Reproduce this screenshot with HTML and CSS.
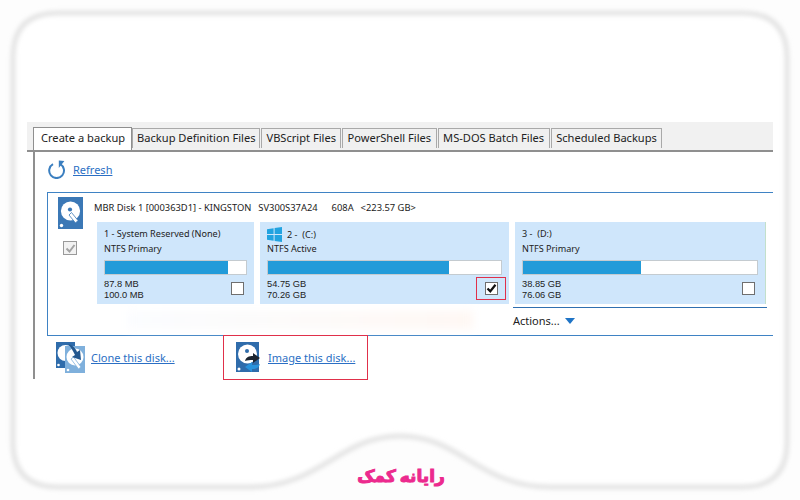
FILE: index.html
```html
<!DOCTYPE html>
<html lang="en">
<head>
<meta charset="utf-8">
<title>Create a backup</title>
<link rel="stylesheet" href="styles.css">
</head>
<body>
<svg class="frame" width="800" height="500" viewBox="0 0 800 500" aria-hidden="true">
  <defs>
    <path id="panel" d="M58 13H742C772 13 787 28 787 58V442C787 472 772 487 742 487H550C480 487 460 436 400 436C340 436 320 487 250 487H58C28 487 13 472 13 442V58C13 28 28 13 58 13Z"/>
    <filter id="soft" x="-5%" y="-5%" width="110%" height="110%"><feGaussianBlur stdDeviation="2.2"/></filter>
  </defs>
  <use href="#panel" fill="#ffffff"/>
  <use href="#panel" fill="none" stroke="#e4e4e4" stroke-width="5" filter="url(#soft)"/>
</svg>
<main class="shot">
  <nav class="tabs">
    <span class="tab tab-active">Create a backup</span>
    <span class="tab">Backup Definition Files</span>
    <span class="tab">VBScript Files</span>
    <span class="tab">PowerShell Files</span>
    <span class="tab">MS-DOS Batch Files</span>
    <span class="tab">Scheduled Backups</span>
  </nav>
  <section class="pane">
    <div class="refresh">
      <svg class="refresh-icon" width="19" height="19" viewBox="0 0 19 19" aria-hidden="true">
        <path d="M6 4.2A7.4 7.4 0 1 0 13.2 4.2" fill="none" stroke="#3b7fc0" stroke-width="2"/>
        <path d="M10.2 .6V8L15.8 .9Z" fill="#3b7fc0" transform="translate(1.6 0)"/>
      </svg>
      <a class="link">Refresh</a>
    </div>
    <div class="disk">
      <div class="disk-side">
        <svg width="25" height="32" viewBox="0 0 25 32" aria-hidden="true">
          <rect width="25" height="32" fill="#3b78b6"/>
          <circle cx="12.5" cy="14" r="9.6" fill="#fff"/>
          <circle cx="12" cy="12.5" r="2.1" fill="#3b78b6"/>
          <path d="M11 18L13.5 15.5L20 23.5L17.5 26Z" fill="#fff" stroke="#3b78b6" stroke-width=".8"/>
          <circle cx="3.5" cy="28.5" r="1.7" fill="#fff"/>
        </svg>
        <span class="side-check">
          <svg width="11" height="11" viewBox="0 0 11 11" aria-hidden="true"><path d="M1.5 5.5L4.5 8.5L9.5 2" fill="none" stroke="#a3a3a3" stroke-width="2"/></svg>
        </span>
      </div>
      <div class="disk-main">
        <div class="disk-title"><span>MBR Disk 1 [000363D1] - KINGSTON</span><span>SV300S37A24</span><span>608A</span><span>&lt;223.57 GB&gt;</span></div>
        <div class="parts">
          <article class="part">
            <div class="part-name">1 - System Reserved (None)</div>
            <div class="part-type">NTFS Primary</div>
            <div class="bar"><div class="bar-fill" style="width:87%"></div></div>
            <div class="part-foot">
              <div class="sizes"><div>87.8 MB</div><div>100.0 MB</div></div>
              <span class="check"></span>
            </div>
          </article>
          <article class="part">
            <div class="part-name part-name-win">
              <svg class="win" width="15" height="15" viewBox="0 0 15 15" aria-hidden="true">
                <path d="M0 2.2L6.6 1.2V7H0ZM7.6 1L15 0V7H7.6ZM0 8H6.6V13.8L0 12.8ZM7.6 8H15V15L7.6 14Z" fill="#22a3e0"/>
              </svg>
              <span>2 - &nbsp;(C:)</span>
            </div>
            <div class="part-type">NTFS Active</div>
            <div class="bar"><div class="bar-fill" style="width:77.500%"></div></div>
            <div class="part-foot">
              <div class="sizes"><div>54.75 GB</div><div>70.26 GB</div></div>
              <span class="hilite">
                <span class="check check-on">
                  <svg width="11" height="11" viewBox="0 0 11 11" aria-hidden="true"><path d="M1.5 5.5L4.3 8.3L9.5 1.8" fill="none" stroke="#111" stroke-width="2.2"/></svg>
                </span>
              </span>
            </div>
          </article>
          <article class="part">
            <div class="part-name">3 - &nbsp;(D:)</div>
            <div class="part-type">NTFS Primary</div>
            <div class="bar"><div class="bar-fill" style="width:50.400%"></div></div>
            <div class="part-foot">
              <div class="sizes"><div>38.85 GB</div><div>76.06 GB</div></div>
              <span class="check"></span>
            </div>
          </article>
        </div>
        <div class="actions-row">
          <div class="smear"></div>
          <div class="actions">Actions...<i class="caret"></i></div>
        </div>
      </div>
    </div>
    <div class="ops">
      <div class="op op-clone">
        <svg width="30" height="31" viewBox="0 0 30 31" aria-hidden="true">
          <rect width="19" height="26" fill="#2f6cab"/>
          <circle cx="9.500" cy="11" r="8" fill="#fff"/>
          <circle cx="2.500" cy="23" r="1.300" fill="#fff"/>
          <rect x="9" y="4" width="20" height="27" fill="#7fb0dc"/>
          <circle cx="19" cy="15" r="8.500" fill="#fff"/>
          <path d="M15 17L17.500 15L25 25L22.500 27Z" fill="#fff" stroke="#7fb0dc" stroke-width=".8"/>
          <circle cx="12" cy="28" r="1.300" fill="#fff"/>
          <path d="M12 2C17 3 20 7 21 10L24 8L25 18L16 15L19 13C17 9 15 5 12 2Z" fill="#24588f"/>
        </svg>
        <a class="link">Clone this disk...</a>
      </div>
      <div class="op op-image">
        <svg width="25" height="31" viewBox="0 0 25 31" aria-hidden="true">
          <rect width="23" height="30" fill="#2f6cab"/>
          <circle cx="11.500" cy="12" r="9.500" fill="#fff"/>
          <circle cx="11" cy="9" r="2" fill="#2f6cab"/>
          <circle cx="3" cy="27" r="1.500" fill="#fff"/>
          <path d="M9 19C10 15 13 14 17 14V11L24 16L17 21V18C14 18 11 18 9 19Z" fill="#1c2530"/>
          <path d="M24 22C23 26 20 27 16 27V30L9 25L16 20V23C19 23 22 23 24 22Z" fill="#2a93dc"/>
        </svg>
        <a class="link">Image this disk...</a>
      </div>
    </div>
  </section>
</main>
<footer class="brand" dir="rtl" lang="fa">رایانه کمک</footer>
</body>
</html>
```

FILE: styles.css
```css
* { box-sizing: border-box; }

html, body {
  margin: 0;
  width: 800px;
  height: 500px;
  overflow: hidden;
}

body {
  background: #fdfdfd;
  font-family: "Noto Sans", "Liberation Sans", sans-serif;
  color: #222;
  padding: 122px 27px 0;
}

.frame {
  position: absolute;
  left: 0;
  top: 0;
}

.shot {
  position: relative;
  width: 746px;
  height: 257px;
  background: #fff;
}

.tabs {
  display: flex;
  gap: 1px;
  height: 30px;
  padding: 6px 0 0 6px;
  background: #f1f1f1;
  border-bottom: 2px solid #8f8f8f;
  font-size: 11.100px;
  line-height: 18px;
}

.tab {
  height: 20px;
  padding: 0 4px;
  background: #f0f0f0;
  border: 1px solid #a9a9a9;
  border-bottom: 0;
  white-space: nowrap;
}

.tab:nth-child(n+4) {
  padding: 0 4.500px;
}

.tab-active {
  height: 23px;
  margin-top: -1px;
  margin-right: -1px;
  padding: 1px 6px 0 7px;
  background: #fff;
  border-color: #8f8f8f;
}

.pane {
  margin-left: 6px;
  height: 227px;
  border-left: 2px solid #8f8f8f;
  padding: 8px 0 0 12px;
}

.refresh {
  display: flex;
  align-items: center;
  gap: 7px;
  height: 19px;
}

.link {
  color: #2b6fc4;
  text-decoration: underline;
  font-size: 11px;
  cursor: pointer;
}

.disk {
  display: flex;
  margin-top: 13px;
  height: 144px;
  border: 1px solid #3f83c4;
  border-right: 0;
}

.disk-side {
  width: 49px;
  flex: none;
  display: flex;
  flex-direction: column;
  align-items: flex-start;
  padding: 4px 0 0 10px;
}

.side-check {
  display: flex;
  align-items: center;
  justify-content: center;
  width: 14px;
  height: 14px;
  margin: 12px 0 0 5px;
  border: 1px solid #9a9a9a;
  background: #f2f2f2;
}

.disk-main {
  flex: 1;
  min-width: 0;
}

.disk-title {
  display: flex;
  height: 29px;
  margin-left: -3px;
  padding-top: 8px;
  font-size: 9.350px;
  line-height: 13px;
  white-space: nowrap;
}

.disk-title span {
  margin-right: 7px;
}

.disk-title span:nth-child(2) {
  margin-right: 14px;
}

.parts {
  display: grid;
  grid-template-columns: 157px 249px 250px;
  gap: 6px;
  margin-right: 7px;
  border-right: 2px solid #c3e0cb;
  padding-right: 6px;
}

.part {
  height: 82px;
  padding: 5px 7px 0;
  background: #cfe6fb;
  font-size: 9.100px;
  line-height: 13px;
}

.part-name,
.part-type {
  height: 15px;
  white-space: nowrap;
}

.part-name-win {
  display: flex;
  align-items: center;
  gap: 5px;
}

.bar {
  height: 15px;
  margin-top: 3px;
  background: #fff;
  border: 1px solid #c4cbd0;
}

.bar-fill {
  height: 100%;
  background: #229bd9;
}

.part-foot {
  display: flex;
  justify-content: space-between;
  align-items: flex-start;
  margin-top: 4px;
  padding-right: 3px;
}

.sizes {
  font-family: "Liberation Sans", sans-serif;
  font-size: 9.300px;
  line-height: 11px;
}

.check {
  display: flex;
  align-items: center;
  justify-content: center;
  width: 13px;
  height: 13px;
  margin-top: 3px;
  background: #fff;
  border: 1px solid #6f6f6f;
}

.hilite {
  display: flex;
  align-items: center;
  justify-content: center;
  width: 30px;
  height: 23px;
  margin: -2px -7px 0 0;
  border: 1px solid #e0304a;
}

.hilite .check {
  margin-top: 0;
}

.actions-row {
  position: relative;
  display: flex;
  justify-content: flex-end;
  margin-top: 3px;
  padding-right: 6px;
}

.smear {
  position: absolute;
  left: 30px;
  right: 300px;
  top: 4px;
  height: 18px;
  background: linear-gradient(90deg, #fbfdff, #fff8f4);
  filter: blur(4px);
}

.actions {
  position: relative;
  width: 254px;
  height: 28px;
  padding-bottom: 2px;
  border-top: 1px solid #2f6fb0;
  font-size: 11px;
  line-height: 24px;
  display: flex;
  align-items: center;
  gap: 5px;
}

.caret {
  width: 0;
  height: 0;
  border-left: 5px solid transparent;
  border-right: 5px solid transparent;
  border-top: 6px solid #1f74c6;
}

.ops {
  display: flex;
  margin-top: 6px;
}

.op {
  display: flex;
  align-items: center;
  gap: 5px;
  height: 31px;
}

.op-clone {
  width: 180px;
  padding-left: 9px;
}

.op-image {
  position: relative;
  padding-left: 9px;
  gap: 7px;
}

.op-image::after {
  content: "";
  position: absolute;
  left: -4px;
  top: -7px;
  width: 143px;
  height: 43px;
  border: 1px solid #e0304a;
}

.brand {
  position: absolute;
  left: 340px;
  width: 122px;
  top: 460px;
  text-align: center;
  font-family: "DejaVu Sans", sans-serif;
  font-weight: 700;
  font-size: 17px;
  word-spacing: -2px;
  line-height: 32px;
  color: #ec2a8e;
  -webkit-text-stroke: 1px #ec2a8e;
  white-space: nowrap;
}
```
